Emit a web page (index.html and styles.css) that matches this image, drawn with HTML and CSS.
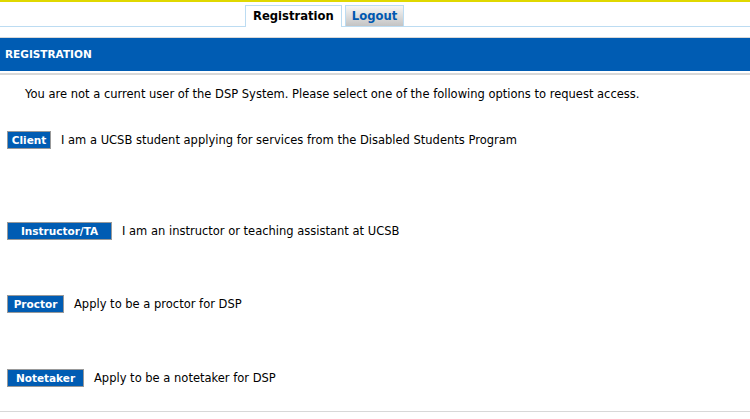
FILE: index.html
```html
<!DOCTYPE html>
<html lang="en">

<head>
    <meta charset="UTF-8">
    <meta name="viewport" content="width=device-width, initial-scale=1.0">
    <title>Registration - DSP</title>
    <link rel="stylesheet" href="styles.css">
</head>

<body>
    <header>
        <ul class="tabs">
            <li class="tab active"><a href="#">Registration</a></li>
            <li class="tab"><a href="#">Logout</a></li>
        </ul>
    </header>

    <div class="section-bar">REGISTRATION</div>

    <div class="content">
        <p class="intro">You are not a current user of the DSP System. Please select one of the following options to request access.</p>

        <div class="option option-client">
            <button class="btn btn-client">Client</button>
            <span>I am a UCSB student applying for services from the Disabled Students Program</span>
        </div>

        <div class="option option-instructor">
            <button class="btn btn-instructor">Instructor/TA</button>
            <span>I am an instructor or teaching assistant at UCSB</span>
        </div>

        <div class="option option-proctor">
            <button class="btn btn-proctor">Proctor</button>
            <span>Apply to be a proctor for DSP</span>
        </div>

        <div class="option option-notetaker">
            <button class="btn btn-notetaker">Notetaker</button>
            <span>Apply to be a notetaker for DSP</span>
        </div>
    </div>

    <div class="footer-line"></div>
</body>

</html>
```

FILE: styles.css
```css
body {
    font-family: "DejaVu Sans", Verdana, sans-serif;
    font-size: 11.5px;
    margin: 0;
    padding: 0;
    background-color: #fff;
    color: #000;
}

header {
    border-top: 2px solid #e0d800;
    border-bottom: 1px solid #bcdcf2;
    height: 24px;
    display: flex;
}

.tabs {
    display: flex;
    align-items: flex-end;
    gap: 3px;
    list-style-type: none;
    margin: 0 0 0 245px;
    padding: 0;
}

.tab a {
    display: block;
    font-weight: bold;
    font-size: 11.6px;
    text-decoration: none;
    color: #0058b0;
    line-height: 20px;
    padding: 0 6px;
    border: 1px solid #bcdcf2;
    border-bottom: none;
    background: linear-gradient(#f6f6f6, #c4c4c4);
}

.tab.active a {
    color: #000;
    background: #fff;
    padding: 0 7px 1px 7px;
    margin-bottom: -1px;
}

.section-bar {
    margin-top: 10px;
    border-top: 1px solid #d8d8d8;
    border-bottom: 2px solid #fff;
    background-color: #005cb3;
    color: #fff;
    font-weight: bold;
    font-size: 10.5px;
    height: 33px;
    line-height: 33px;
    padding-left: 5px;
    box-shadow: 0 2px 0 #d8d8d8;
}

.content {
    padding: 0 7px;
}

.intro {
    margin: 14px 0 0 18px;
}

.option {
    display: flex;
    align-items: center;
    gap: 10px;
}

.btn {
    background-color: #005cb3;
    color: #fff;
    border: 1px solid #999;
    font-family: "DejaVu Sans", Verdana, sans-serif;
    font-size: 10.5px;
    font-weight: bold;
    height: 18px;
    padding: 0;
    margin: 0;
    cursor: pointer;
}

.btn-client {
    width: 44px;
}

.btn-instructor {
    width: 105px;
}

.btn-proctor {
    width: 57px;
}

.btn-notetaker {
    width: 77px;
}

.option-client {
    margin-top: 30px;
}

.option-instructor {
    margin-top: 73px;
}

.option-proctor {
    margin-top: 55px;
}

.option-notetaker {
    margin-top: 56px;
}

.footer-line {
    margin-top: 24px;
    border-top: 1px solid #d8d8d8;
}
```
